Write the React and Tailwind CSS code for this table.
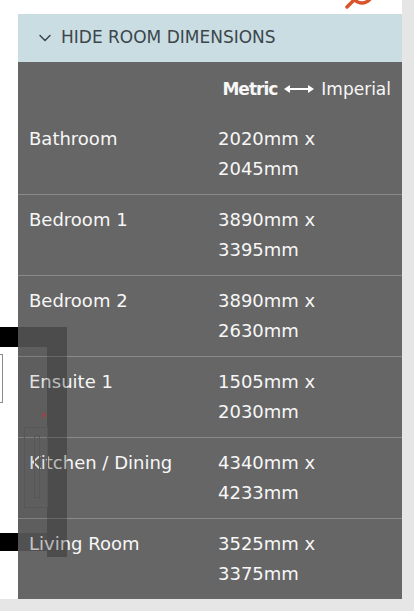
import { ChevronDown } from 'lucide-react'

const ROOMS = [
  { name: 'Bathroom', w: '2020mm x', h: '2045mm' },
  { name: 'Bedroom 1', w: '3890mm x', h: '3395mm' },
  { name: 'Bedroom 2', w: '3890mm x', h: '2630mm' },
  { name: 'Ensuite 1', w: '1505mm x', h: '2030mm' },
  { name: 'Kitchen / Dining', w: '4340mm x', h: '4233mm' },
  { name: 'Living Room', w: '3525mm x', h: '3375mm' },
]

export default function App() {
  return (
    <div className="w-[414px] h-[611px] bg-[#e6e6e6] overflow-hidden" style={{ fontFamily: '"DejaVu Sans", Verdana, sans-serif' }}>
      <div className="relative w-[402px] h-[599px] bg-white pt-[14px] pl-[18px]">
        {/* search icon peeking in from above */}
        <svg className="absolute left-[340px] top-0" width="40" height="10" viewBox="0 0 40 10">
          <circle cx="22" cy="-7" r="10" fill="none" stroke="#d9532b" strokeWidth="3.5" />
          <line x1="14" y1="0" x2="7" y2="7" stroke="#d9532b" strokeWidth="3.5" strokeLinecap="round" />
        </svg>

        <div className="w-[384px]">
          <div className="h-[48px] bg-[#c9dde3] flex items-center pl-[17px] gap-[6px] text-[#3c464c]">
            <ChevronDown size={20} strokeWidth={1.8} className="text-[#3c464c]" />
            <span className="text-[17px]">HIDE ROOM DIMENSIONS</span>
          </div>

          <div className="bg-[#666666] text-[#f7f7f7] px-[11px]">
            <div className="flex justify-end items-center pt-[15px] pb-[12px] text-[17px] leading-[24px]">
              <span className="font-bold tracking-[-1px]">Metric</span>
              <svg className="mx-[7px]" width="30" height="10" viewBox="0 0 30 10">
                <line x1="3" y1="5" x2="27" y2="5" stroke="#fff" strokeWidth="2" />
                <path d="M0 5 L6 1 L6 9 Z M30 5 L24 1 L24 9 Z" fill="#fff" />
              </svg>
              <span>Imperial</span>
            </div>

            {ROOMS.map((r, i) => (
              <div
                key={r.name}
                className={`grid grid-cols-[189px_1fr] pb-[10px] text-[18px] leading-[30px] ${i > 0 ? 'pt-[10px] border-t border-[#8a8a8a] -mx-[11px] px-[11px]' : 'pt-[11px]'}`}
              >
                <div>{r.name}</div>
                <div>
                  <div>{r.w}</div>
                  <div>{r.h}</div>
                </div>
              </div>
            ))}
          </div>
        </div>

        {/* partially hidden floor plan widget behind / over left edge */}
        <div className="absolute left-0 top-[327px] w-[18px] h-[20px] bg-black" />
        <div className="absolute left-0 top-[533px] w-[18px] h-[18px] bg-black" />
        <div className="absolute left-0 top-[354px] w-[3px] h-[49px] border-y border-r border-[#8a8a8a]" />

        <div className="absolute left-[18px] top-[327px] w-[49px] h-[20px] bg-black/25" />
        <div className="absolute left-[47px] top-[347px] w-[20px] h-[210px] bg-black/25" />
        <div className="absolute left-[18px] top-[347px] w-[29px] h-[186px] bg-black/[0.08]" />
        <div className="absolute left-[18px] top-[533px] w-[29px] h-[18px] bg-black/20" />
        <div className="absolute left-[42px] top-[411px] w-0 h-0 border-y-[4px] border-y-transparent border-l-[5px] border-l-[#8c4a4a]" />
        <div className="absolute left-[24px] top-[427px] w-[24px] h-[81px] border border-[#575757]" />
        <div className="absolute left-[34px] top-[435px] w-[6px] h-[63px] border border-[#575757]" />
      </div>
    </div>
  )
}
